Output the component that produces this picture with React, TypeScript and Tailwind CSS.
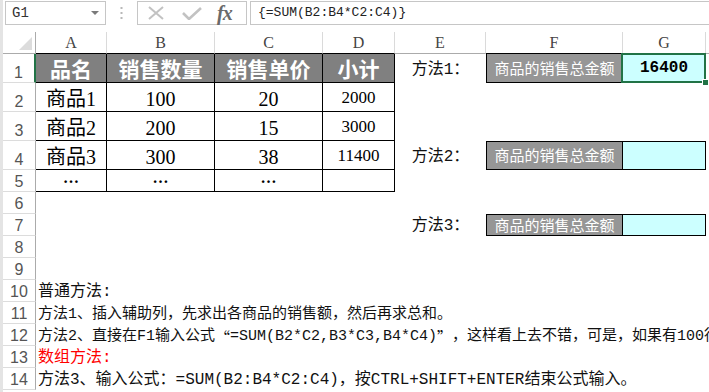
const mono = "font-['Liberation_Mono','Noto_Sans_CJK_SC',monospace]";
const cjk = "font-['Noto_Sans_CJK_SC',sans-serif]";
const serif = "font-['Liberation_Serif','Noto_Sans_CJK_SC',serif]";

function RowHead({ n, h, active }: { n?: number; h: string; active?: boolean }) {
  return (
    <div
      className={`${h} w-[33px] shrink-0 flex items-end justify-center pb-[1px] border-b border-b-[#dcdcdc] border-r ${
        active ? "border-r-2 border-r-[#217346]" : "border-r-[#ababab]"
      } font-['Liberation_Sans',sans-serif] text-[16px] leading-none text-[#555]`}
    >
      {n}
    </div>
  );
}

function FormulaBar() {
  return (
    <div className="h-[32px] flex items-start pt-[1px] bg-white">
      <div className="ml-[2px] w-[101px] h-[24px] border border-[#c6c6c6] flex items-center justify-between px-[6px]">
        <span className={`${mono} text-[14px] text-[#333]`}>G1</span>
        <svg width="8" height="5" viewBox="0 0 8 5">
          <polygon points="0,0 8,0 4,4" fill="#7a7a7a" />
        </svg>
      </div>
      <div className="w-[31px] h-[24px] flex items-center justify-center">
        <svg width="3" height="12" viewBox="0 0 3 12">
          <rect x="0.5" y="0" width="2" height="2" fill="#b8b8b8" />
          <rect x="0.5" y="5" width="2" height="2" fill="#b8b8b8" />
          <rect x="0.5" y="10" width="2" height="2" fill="#b8b8b8" />
        </svg>
      </div>
      <div className="w-[110px] h-[24px] border border-[#c6c6c6] flex items-center">
        <svg className="ml-[10px]" width="16" height="14" viewBox="0 0 16 14">
          <path d="M1 1 L15 13 M15 1 L1 13" stroke="#c2c2c2" strokeWidth="2" />
        </svg>
        <svg className="ml-[18px]" width="20" height="13" viewBox="0 0 20 13">
          <path d="M1 6 L7 12 L19 1" stroke="#c2c2c2" strokeWidth="2.6" fill="none" />
        </svg>
        <span className="ml-[15px] font-['Liberation_Serif',serif] italic font-bold text-[20px] leading-none text-[#6a6a6a] tracking-[-1px]">
          fx
        </span>
      </div>
      <div className="ml-[3px] flex-1 h-[24px] border-y border-l border-[#c6c6c6] flex items-center pl-[7px]">
        <span className={`${mono} text-[13px] text-[#222]`}>{"{=SUM(B2:B4*C2:C4)}"}</span>
      </div>
    </div>
  );
}

function ColHeader() {
  const hd = `h-full shrink-0 flex items-center justify-center border-r border-r-[#dadada] border-b ${serif} text-[16px] text-[#444]`;
  return (
    <div className="h-[22px] flex">
      <div className="w-[33px] shrink-0 h-full border-r border-r-[#ababab] border-b border-b-[#ababab] flex items-end justify-end pr-[3px] pb-[3px]">
        <svg width="13" height="13" viewBox="0 0 13 13">
          <polygon points="13,0 13,13 0,13" fill="#dcdcdc" />
        </svg>
      </div>
      <div className={`${hd} w-[71px] border-b-black`}>A</div>
      <div className={`${hd} w-[108px] border-b-black`}>B</div>
      <div className={`${hd} w-[108px] border-b-black`}>C</div>
      <div className={`${hd} w-[72px] border-b-black`}>D</div>
      <div className={`${hd} w-[91px] border-b-[#ababab]`}>E</div>
      <div className={`${hd} w-[137px] border-b-black`}>F</div>
      <div className={`${hd} w-[83px] border-b-black`}>G</div>
      <div className={`${hd} flex-1 border-r-0 border-b-[#ababab]`}></div>
    </div>
  );
}

const cell = "h-full shrink-0 flex items-center justify-center border-r border-b border-black";

function Label({ text }: { text: string }) {
  return (
    <div className={`h-full w-[91px] shrink-0 flex items-center justify-center pt-[2px] ${mono} text-[16px] text-[#111]`}>
      {text}
    </div>
  );
}

function Box({ top, value }: { top?: boolean; value?: string }) {
  return (
    <>
      <div
        className={`h-full w-[137px] shrink-0 flex items-center justify-center border-l border-r border-b border-black ${
          top ? "border-t" : ""
        } bg-[#969696] ${cjk} text-[15px] text-white`}
      >
        商品的销售总金额
      </div>
      <div
        className={`relative h-full w-[83px] shrink-0 flex items-center justify-center border-r border-b border-black ${
          top ? "border-t" : ""
        } bg-[#ccffff] font-['Liberation_Mono',monospace] font-bold text-[16px] text-black`}
      >
        {value}
        {value && (
          <>
            <div className="absolute -left-[2px] -top-[1px] -right-[1px] -bottom-[1px] border-2 border-[#217346]"></div>
            <div className="absolute -right-[4px] -bottom-[4px] w-[7px] h-[7px] bg-[#217346] border border-white"></div>
          </>
        )}
      </div>
    </>
  );
}

function TextRow({ n, children, cls }: { n: number; children: React.ReactNode; cls: string }) {
  return (
    <div className="h-[22px] flex">
      <RowHead n={n} h="h-full" />
      <div className={`flex-1 min-w-0 overflow-hidden whitespace-nowrap flex items-end pb-[2px] pl-[2px] ${mono} leading-none ${cls}`}>
        {children}
      </div>
    </div>
  );
}

export default function App() {
  const data = [
    ["商品1", "100", "20", "2000"],
    ["商品2", "200", "15", "3000"],
    ["商品3", "300", "38", "11400"],
  ];
  const q = "font-['Noto_Sans_CJK_SC',sans-serif]";
  return (
    <div className="w-[709px] h-[392px] overflow-hidden bg-white border-l-[3px] border-l-[#e4e4e4]">
      <FormulaBar />
      <ColHeader />

      {/* row 1 */}
      <div className="h-[29px] flex">
        <RowHead n={1} h="h-full" active />
        <div className={`${cell} w-[71px] bg-[#808080] ${cjk} font-bold text-[21px] text-white pt-[2px]`}>品名</div>
        <div className={`${cell} w-[108px] bg-[#808080] ${cjk} font-bold text-[21px] text-white pt-[2px]`}>销售数量</div>
        <div className={`${cell} w-[108px] bg-[#808080] ${cjk} font-bold text-[21px] text-white pt-[2px]`}>销售单价</div>
        <div className={`${cell} w-[72px] bg-[#808080] ${cjk} font-bold text-[21px] text-white pt-[2px]`}>小计</div>
        <Label text="方法1：" />
        <Box value="16400" />
      </div>

      {data.map((r, i) => (
        <div key={i} className="h-[29px] flex">
          <RowHead n={i + 2} h="h-full" />
          <div className={`${cell} w-[71px] ${serif} text-[20px] pt-[4px]`}>{r[0]}</div>
          <div className={`${cell} w-[108px] ${serif} text-[20px] pt-[4px]`}>{r[1]}</div>
          <div className={`${cell} w-[108px] ${serif} text-[20px] pt-[4px]`}>{r[2]}</div>
          <div className={`${cell} w-[72px] ${serif} text-[17px] pt-[2px]`}>{r[3]}</div>
          {i === 2 ? (
            <>
              <Label text="方法2：" />
              <Box top />
            </>
          ) : null}
        </div>
      ))}

      {/* row 5 */}
      <div className="h-[22px] flex">
        <RowHead n={5} h="h-full" />
        <div className={`${cell} w-[71px] ${serif} font-bold text-[16px] pb-[6px]`}>…</div>
        <div className={`${cell} w-[108px] ${serif} font-bold text-[16px] pb-[6px]`}>…</div>
        <div className={`${cell} w-[108px] ${serif} font-bold text-[16px] pb-[6px]`}>…</div>
        <div className={`${cell} w-[72px]`}></div>
      </div>

      <div className="h-[22px] flex">
        <RowHead n={6} h="h-full" />
      </div>
      <div className="h-[22px] flex">
        <RowHead n={7} h="h-full" />
        <div className="w-[359px] shrink-0"></div>
        <Label text="方法3：" />
        <Box top />
      </div>
      <div className="h-[22px] flex">
        <RowHead n={8} h="h-full" />
      </div>
      <div className="h-[22px] flex">
        <RowHead n={9} h="h-full" />
      </div>

      <TextRow n={10} cls="text-[16px] text-[#111]">普通方法:</TextRow>
      <TextRow n={11} cls="text-[15px] text-[#111]">方法1、插入辅助列，先求出各商品的销售额，然后再求总和。</TextRow>
      <TextRow n={12} cls="text-[15px] text-[#111]">
        方法2、直接在F1输入公式<span className={q}>“</span>=SUM(B2*C2,B3*C3,B4*C4)<span className={q}>”</span>，这样看上去不错，可是，如果有100行数据呢？
      </TextRow>
      <TextRow n={13} cls="text-[16px] text-[#ff0000]">数组方法:</TextRow>
      <TextRow n={14} cls="text-[16px] text-[#111]">方法3、输入公式：=SUM(B2:B4*C2:C4)，按CTRL+SHIFT+ENTER结束公式输入。</TextRow>
    </div>
  );
}
